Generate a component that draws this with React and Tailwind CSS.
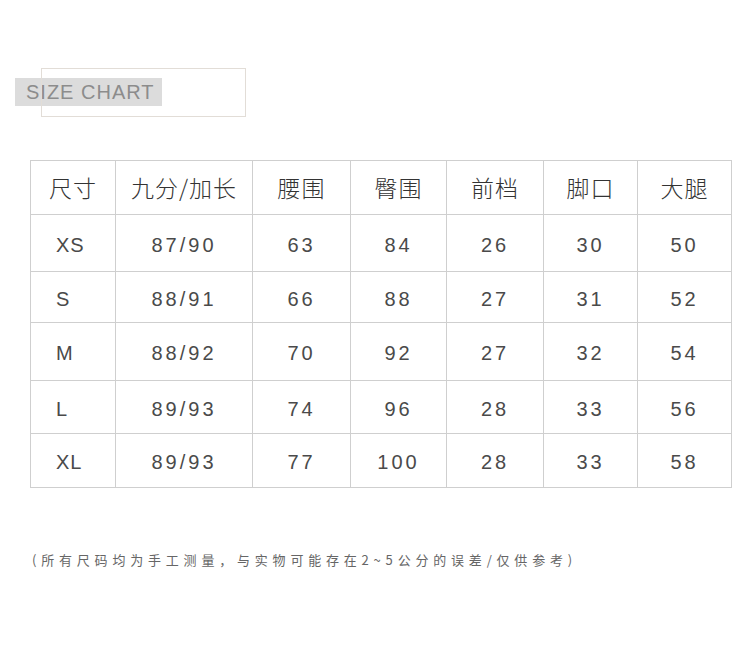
import React from "react";

const cols = [85, 137, 98, 96, 97, 94, 94];
const heads = ["尺寸", "九分/加长", "腰围", "臀围", "前档", "脚口", "大腿"];
const rows = [
  { h: 57, v: ["XS", "87/90", "63", "84", "26", "30", "50"] },
  { h: 51, v: ["S", "88/91", "66", "88", "27", "31", "52"] },
  { h: 58, v: ["M", "88/92", "70", "92", "27", "32", "54"] },
  { h: 53, v: ["L", "89/93", "74", "96", "28", "33", "56"] },
  { h: 54, v: ["XL", "89/93", "77", "100", "28", "33", "58"] },
];

const cjk = { fontFamily: '"Noto Sans CJK SC", "Noto Sans", sans-serif' };
const num = { fontFamily: '"Liberation Sans", Arial, sans-serif' };

export default function App() {
  return (
    <div className="w-[750px] h-[648px] bg-white overflow-hidden pt-[68px]">
      <div className="relative h-[49px] pt-[10px]">
        <div className="ml-[15px] w-[147px] h-[28px] bg-[#dcdcdc] flex items-center pl-[11px]">
          <span
            className="text-[20px] leading-none tracking-[1px] text-[#8c8c8c]"
            style={num}
          >
            SIZE CHART
          </span>
        </div>
        <div className="absolute left-[41px] top-0 w-[205px] h-[49px] border border-[#e2ddd7]" />
      </div>

      <div className="ml-[30px] mt-[43px] w-[702px] border-l border-t border-[#cfcfcf]">
        <div className="flex h-[54px]">
          {heads.map((t, i) => (
            <div
              key={i}
              style={{ width: cols[i], ...cjk }}
              className={
                "h-full border-r border-b border-[#cfcfcf] flex items-center text-[23px] font-light text-[#333] tracking-[1px] " +
                (i === 0 ? "pl-[18px]" : "justify-center")
              }
            >
              {t}
            </div>
          ))}
        </div>
        {rows.map((r, ri) => (
          <div key={ri} className="flex" style={{ height: r.h }}>
            {r.v.map((t, i) => (
              <div
                key={i}
                style={{ width: cols[i], ...num }}
                className={
                  "h-full border-r border-b border-[#cfcfcf] flex items-center pt-[3px] text-[20px] text-[#4a4a4a] " +
                  (i === 0 ? "pl-[25px] tracking-[1px]" : "justify-center tracking-[3px]")
                }
              >
                {t}
              </div>
            ))}
          </div>
        ))}
      </div>

      <div
        className="ml-[32px] mt-[62px] text-[13px] leading-[20px] tracking-[4.8px] text-[#666]"
        style={cjk}
      >
        (所有尺码均为手工测量，与实物可能存在2~5公分的误差/仅供参考)
      </div>
    </div>
  );
}
